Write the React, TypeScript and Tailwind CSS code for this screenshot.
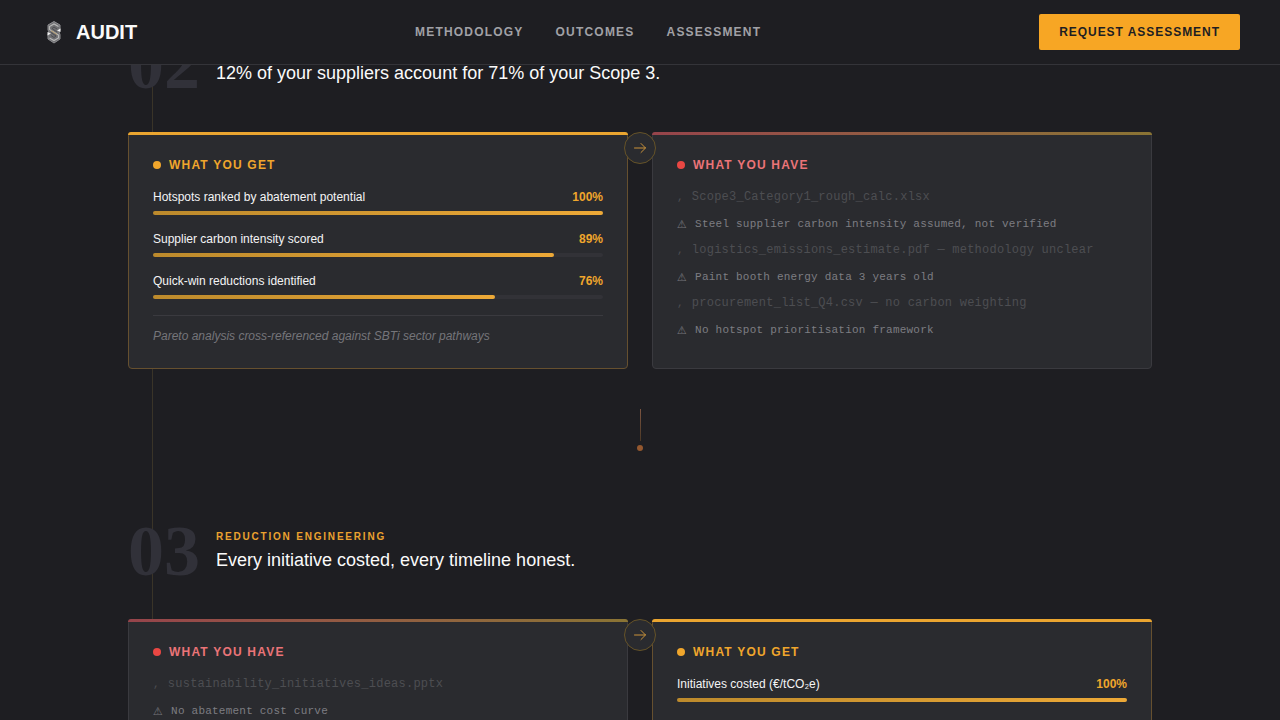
import { Fragment } from "react";

interface Metric {
    label: string;
    value: number;
}

interface Issue {
    file: string;
    warning: string;
}

const NAV_LINKS = ["Methodology", "Outcomes", "Assessment"];

const HOTSPOT_METRICS: Metric[] = [
    { label: "Hotspots ranked by abatement potential", value: 100 },
    { label: "Supplier carbon intensity scored", value: 89 },
    { label: "Quick-win reductions identified", value: 76 },
];

const HOTSPOT_ISSUES: Issue[] = [
    { file: "Scope3_Category1_rough_calc.xlsx", warning: "Steel supplier carbon intensity assumed, not verified" },
    { file: "logistics_emissions_estimate.pdf — methodology unclear", warning: "Paint booth energy data 3 years old" },
    { file: "procurement_list_Q4.csv — no carbon weighting", warning: "No hotspot prioritisation framework" },
];

const REDUCTION_METRICS: Metric[] = [{ label: "Initiatives costed (€/tCO₂e)", value: 100 }];

const REDUCTION_ISSUES: Issue[] = [
    { file: "sustainability_initiatives_ideas.pptx", warning: "No abatement cost curve" },
];

function Logo() {
    return (
        <svg viewBox="0 0 28 28" className="w-7 h-7" fill="none" aria-hidden="true">
            <path d="M14 3.5 20 7v5l-1 2 1 2.500v4.500l-6 4-6-4v-4.500l1-2.500-1-2V7z" fill="#6f6f72" stroke="#8f8f92" />
            <path d="M18.500 8.500 14 6l-4.500 2.500v3L18.500 17v3L14 22.500 9.500 20" stroke="#b9b9b8" strokeWidth="1.200" />
            <path d="M17 11 14 9l-2 1.500 5 3.500M11 14.500l5 3.500-2 1.500-3-2" stroke="#48484a" strokeWidth="0.800" />
            <path d="M17 12.500 20.500 10.500v3.500zM11 15.500 7.500 14v3.500z" fill="#f2f2f2" />
            <path d="M11 12.500 14 14.500 17 16.500" stroke="#b99a62" strokeWidth="0.800" />
        </svg>
    );
}

function Header() {
    return (
        <header className="fixed top-0 inset-x-0 z-50 bg-[#1e1e22] border-b border-[#343439]">
            <div className="h-16 px-10 flex items-center justify-between">
                <a href="#" className="flex items-center gap-2 text-xl font-bold text-[#fafafa]">
                    <Logo />
                    AUDIT
                </a>
                <nav className="flex items-center gap-8">
                    {NAV_LINKS.map(link => (
                        <a key={link} href={`#${link.toLowerCase()}`} className="text-xs font-bold uppercase tracking-[0.1em] text-[#a1a1a6]">
                            {link}
                        </a>
                    ))}
                </nav>
                <button type="button" className="h-9 px-5 rounded-xs bg-[#f7a624] text-xs font-bold uppercase tracking-[0.08em] text-[#1e1e22]">
                    Request Assessment
                </button>
            </div>
        </header>
    );
}

function CardTitle({ kind }: { kind: "get" | "have" }) {
    const isGet = kind === "get";
    return (
        <h3 className={`flex items-center gap-2 mb-4 text-xs leading-4 font-bold uppercase tracking-[0.1em] ${isGet ? "text-[#f0a62c]" : "text-[#eb7478]"}`}>
            <span className={`w-2 h-2 rounded-full ${isGet ? "bg-[#f0a62c]" : "bg-[#e94743]"}`} />
            {isGet ? "What you get" : "What you have"}
        </h3>
    );
}

function GetCard({ metrics, note }: { metrics: Metric[]; note?: string }) {
    return (
        <div className="relative p-6 bg-[#2a2b2f] border border-[#66502f] rounded-sm">
            <div className="absolute -top-px -inset-x-px h-[3px] rounded-t-sm bg-[#eaa530]" />
            <CardTitle kind="get" />
            <ul className="space-y-4">
                {metrics.map(metric => (
                    <li key={metric.label}>
                        <div className="flex justify-between text-xs leading-4">
                            <span className="text-[#f4f4f5]">{metric.label}</span>
                            <span className="font-bold text-[#f0a62c]">{metric.value}%</span>
                        </div>
                        <div className="mt-1.5 h-1 rounded-full bg-[#323237]">
                            <div
                                className="h-full rounded-full bg-linear-to-r from-[#bc8a2c] to-[#eda937]"
                                style={{ width: `${metric.value}%` }}
                            />
                        </div>
                    </li>
                ))}
            </ul>
            {note && (
                <p className="mt-4 pt-3 border-t border-[#3a3a3f] text-xs leading-4 italic text-[#75757a]">{note}</p>
            )}
        </div>
    );
}

function HaveCard({ issues }: { issues: Issue[] }) {
    return (
        <div className="relative p-6 bg-[#2a2b2f] border border-[#3a3a3f] rounded-sm">
            <div className="absolute -top-px -inset-x-px h-[3px] rounded-t-sm bg-linear-to-r from-[#96444b] to-[#8a7434]" />
            <CardTitle kind="have" />
            <ul className="flex flex-col gap-2 font-['Liberation_Mono','DejaVu_Sans',monospace]">
                {issues.map(issue => (
                    <Fragment key={issue.file}>
                        <li className="flex gap-2 text-xs leading-4 tracking-[0.02em] text-[#4d4e52]">
                            <span className="text-[11px] leading-4">,</span>
                            <span>{issue.file}</span>
                        </li>
                        <li className="flex items-end gap-2 pt-[3px] pb-0.5 text-[11px] leading-4 tracking-[0.02em] text-[#7d7d82]">
                            <span className="leading-[14px] text-[#77777c]">⚠</span>
                            <span>{issue.warning}</span>
                        </li>
                    </Fragment>
                ))}
            </ul>
        </div>
    );
}

function SectionHeading({ number, label, title }: { number: string; label: string; title: string }) {
    return (
        <div className="relative flex items-center gap-4 mb-8">
            <span className="text-7xl leading-none font-bold text-[#313139] font-['Liberation_Serif',serif]">{number}</span>
            <div className="flex flex-col">
                <p className="text-[10px] leading-[18px] font-bold uppercase tracking-[0.18em] text-[#eba22f]">{label}</p>
                <h2 className="text-lg leading-7 text-[#fafafa]">{title}</h2>
            </div>
        </div>
    );
}

function ArrowBadge() {
    return (
        <div className="absolute top-0 left-1/2 -translate-x-1/2 w-8 h-8 rounded-full bg-[#2a2b2f] border border-[#665328] flex items-center justify-center">
            <svg viewBox="0 0 14 14" className="w-3.5 h-3.5" fill="none" stroke="#c9923a" strokeLinecap="round" strokeLinejoin="round" aria-hidden="true">
                <path d="M1.500 7H12.500M8 2.500 12.500 7 8 11.500" />
            </svg>
        </div>
    );
}

function Connector() {
    return (
        <div className="flex flex-col items-center gap-1 pt-10 pb-16">
            <div className="w-px h-8 bg-linear-to-b from-[#7d5541] to-[#4c3926]" />
            <div className="w-1.5 h-1.5 rounded-full bg-[#94582f]" />
        </div>
    );
}

export default function App() {
    return (
        <div className="h-screen overflow-hidden bg-[#1e1e22] font-['Liberation_Sans',Arial,sans-serif]">
            <Header />
            <main className="px-6 pt-7">
                <div className="relative max-w-5xl mx-auto">
                    <div className="absolute inset-y-0 left-6 w-px bg-[#3a3428]" />

                    <section id="outcomes">
                        <SectionHeading
                            number="02"
                            label="Hotspot Analysis"
                            title="12% of your suppliers account for 71% of your Scope 3."
                        />
                        <div className="relative grid grid-cols-2 gap-6">
                            <GetCard metrics={HOTSPOT_METRICS} note="Pareto analysis cross-referenced against SBTi sector pathways" />
                            <HaveCard issues={HOTSPOT_ISSUES} />
                            <ArrowBadge />
                        </div>
                    </section>

                    <Connector />

                    <section id="methodology">
                        <SectionHeading
                            number="03"
                            label="Reduction Engineering"
                            title="Every initiative costed, every timeline honest."
                        />
                        <div className="relative grid grid-cols-2 gap-6">
                            <HaveCard issues={REDUCTION_ISSUES} />
                            <GetCard metrics={REDUCTION_METRICS} />
                            <ArrowBadge />
                        </div>
                    </section>
                </div>
            </main>
        </div>
    );
}
